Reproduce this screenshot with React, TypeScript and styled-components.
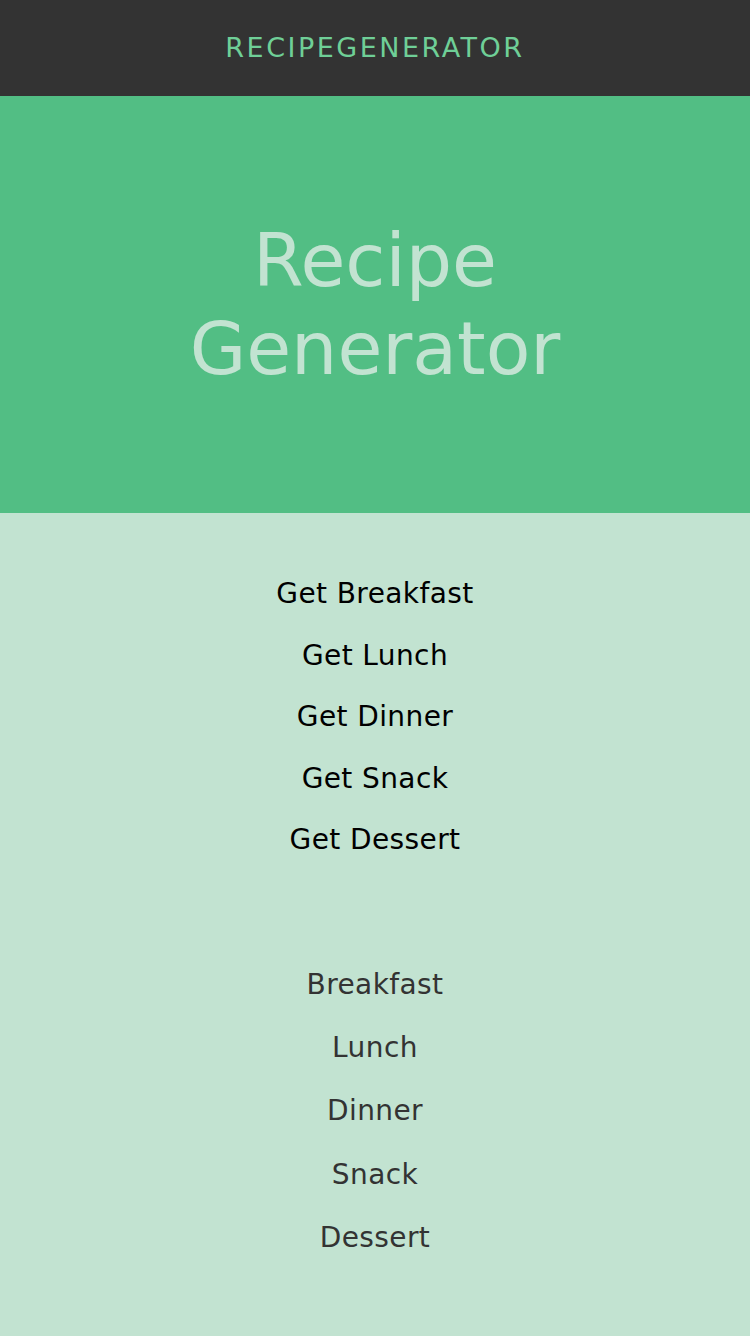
import React from "react";
import styled, { createGlobalStyle } from "styled-components";

const Global = createGlobalStyle`
  html, body { margin: 0; padding: 0; }
  body {
    font-family: "DejaVu Sans", "Open Sans", sans-serif;
    background: #c2e3d1;
  }
`;

const Page = styled.div`
  display: flex;
  flex-direction: column;
  min-height: 1336px;
  background: #c2e3d1;
`;

const NavBar = styled.header`
  height: 96px;
  background: #333333;
  display: flex;
  align-items: center;
  justify-content: center;
`;

const Brand = styled.div`
  color: #6fcf97;
  font-size: 27px;
  letter-spacing: 2.5px;
  text-transform: uppercase;
  padding-bottom: 2px;
`;

const Hero = styled.section`
  height: 417px;
  background: #52be84;
  display: flex;
  align-items: center;
  justify-content: center;
`;

const HeroTitle = styled.h1`
  margin: 0;
  color: #c2e3d1;
  font-weight: 400;
  font-size: 73px;
  line-height: 88px;
  text-align: center;
  max-width: 440px;
`;

const Lists = styled.main`
  display: flex;
  flex-direction: column;
  align-items: center;
  padding: 50px 0 66px;
  gap: 82px;
`;

const List = styled.ul`
  list-style: none;
  margin: 0;
  padding: 0;
  display: flex;
  flex-direction: column;
  align-items: center;
`;

const Item = styled.li<{ $dark?: boolean; $h: number }>`
  height: ${(p) => p.$h}px;
  display: flex;
  align-items: center;
  justify-content: center;
  font-size: 28px;
  letter-spacing: 0.4px;
  color: ${(p) => (p.$dark ? "#000000" : "#333333")};
`;

const meals = ["Breakfast", "Lunch", "Dinner", "Snack", "Dessert"];

export default function App() {
  return (
    <Page>
      <Global />
      <NavBar>
        <Brand>RecipeGenerator</Brand>
      </NavBar>
      <Hero>
        <HeroTitle>Recipe Generator</HeroTitle>
      </Hero>
      <Lists>
        <List>
          {meals.map((m) => (
            <Item key={m} $dark $h={61.5}>
              Get {m}
            </Item>
          ))}
        </List>
        <List>
          {meals.map((m) => (
            <Item key={m} $h={63.3}>
              {m}
            </Item>
          ))}
        </List>
      </Lists>
    </Page>
  );
}
